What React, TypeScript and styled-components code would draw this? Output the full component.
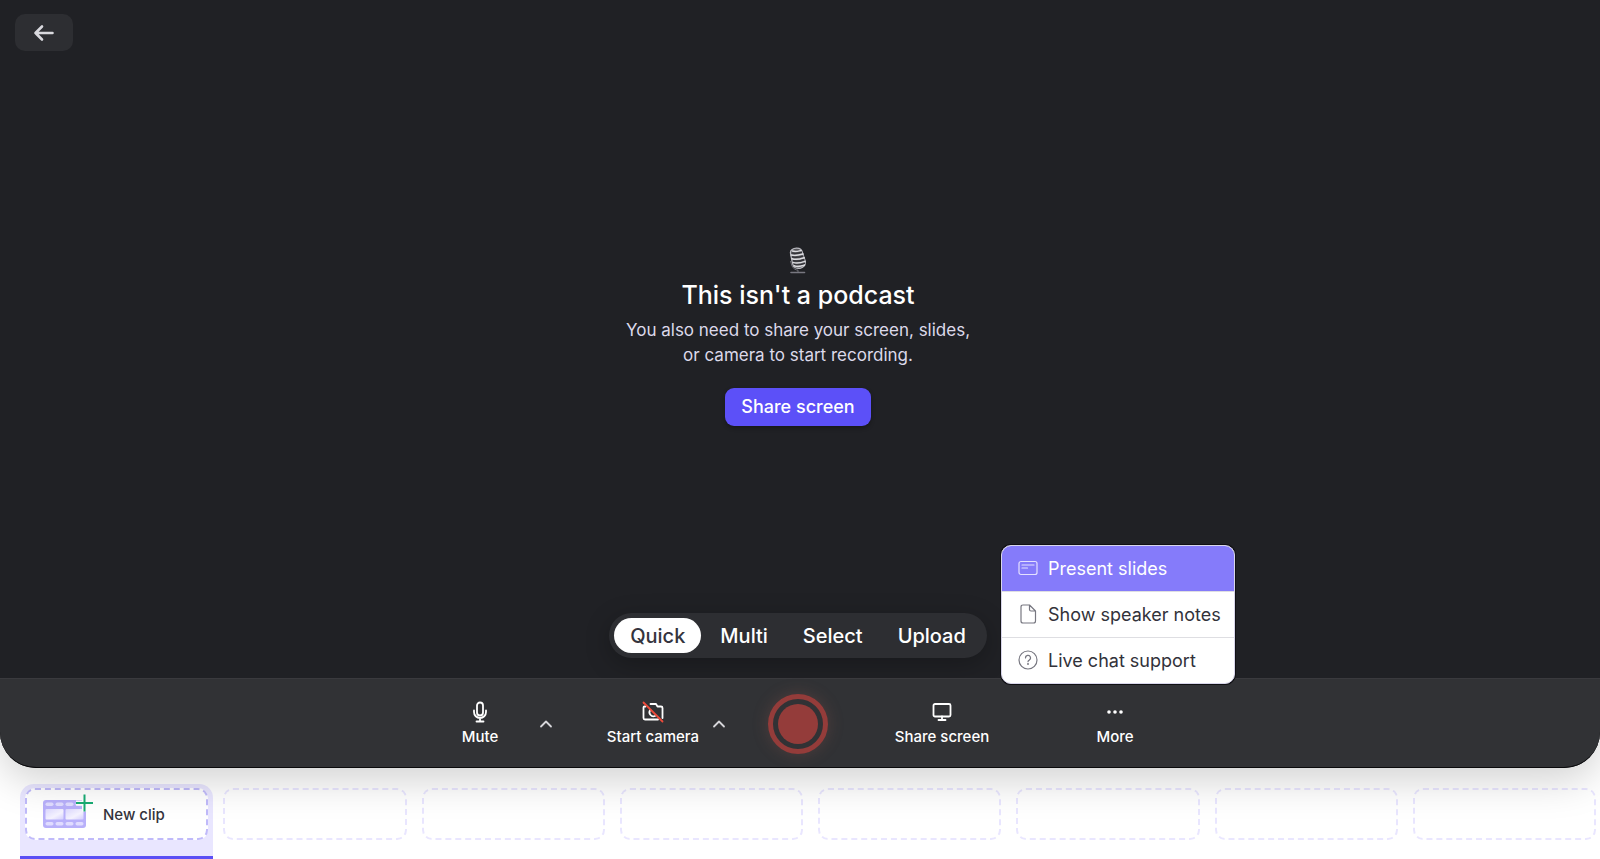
import React from "react";
import styled, { createGlobalStyle, css } from "styled-components";

const GlobalStyle = createGlobalStyle`
  *, *::before, *::after { box-sizing: border-box; }
  body {
    margin: 0;
    background: #ffffff;
    font-family: Inter, "Liberation Sans", sans-serif;
    -webkit-font-smoothing: antialiased;
  }
  button {
    font: inherit;
    color: inherit;
    border: 0;
    margin: 0;
    padding: 0;
    background: none;
    cursor: pointer;
  }
  h1, p, ul { margin: 0; padding: 0; }
  svg { display: block; flex: none; }
`;

const Page = styled.div`
  display: flex;
  flex-direction: column;
  min-height: 100vh;
  overflow: hidden;
`;

const Recorder = styled.main`
  position: relative;
  z-index: 1;
  flex: 1;
  display: flex;
  flex-direction: column;
  border-radius: 0 0 36px 36px;
  background: #202125;
  box-shadow: 0 12px 40px rgba(0, 0, 0, 0.18);
`;

const Stage = styled.section`
  flex: 1;
  display: grid;
  padding: 14px 4px 20px 0;

  > * { grid-area: 1 / 1; }
`;

const BackButton = styled.button`
  place-self: start;
  display: grid;
  place-items: center;
  width: 58px;
  height: 37px;
  margin-left: 15px;
  border-radius: 10px;
  background: #2d2e32;
  color: #d9d9de;
`;

const Message = styled.div`
  place-self: center;
  display: flex;
  flex-direction: column;
  align-items: center;
  text-align: center;
`;

const Title = styled.h1`
  margin-top: 5px;
  font-size: 25px;
  line-height: 32px;
  font-weight: 500;
  color: #ffffff;
`;

const Lead = styled.p`
  margin-top: 7px;
  font-size: 17px;
  line-height: 25px;
  color: #dcd9ea;
`;

const PrimaryButton = styled.button`
  height: 38px;
  margin-top: 20px;
  padding: 0 16px;
  border-radius: 9px;
  background: #5c50f8;
  box-shadow: 0 2px 4px rgba(0, 0, 0, 0.3);
  font-size: 18px;
  font-weight: 500;
  color: #ffffff;
`;

const ModeBar = styled.div`
  place-self: end center;
  display: flex;
  gap: 3px;
  padding: 5px;
  border-radius: 23px;
  background: #2d2e32;
  box-shadow: 0 6px 24px rgba(0, 0, 0, 0.25);
`;

const ModeButton = styled.button<{ $active?: boolean }>`
  height: 35px;
  padding: 0 16px;
  border-radius: 18px;
  font-size: 20px;
  font-weight: 500;
  color: #ffffff;
  ${(p) => p.$active && css`
    background: #ffffff;
    color: #34343d;
  `}
`;

const Toolbar = styled.section`
  display: grid;
  grid-template-columns: 1fr auto 1fr;
  align-items: center;
  height: 90px;
  padding: 1px 4px 0 0;
  border-top: 1px solid #3a3a3e;
  border-bottom: 1px solid #0a0a0c;
  border-radius: 0 0 36px 36px;
  background: #313235;
`;

const ToolGroup = styled.div<{ $side: "left" | "right" }>`
  display: flex;
  ${(p) => p.$side === "left"
    ? css`justify-content: flex-end; gap: 41px; padding-right: 37px;`
    : css`gap: 65px; padding-left: 60px;`}
`;

const Tool = styled.div`
  position: relative;
  display: flex;
  align-items: center;
`;

const ToolButton = styled.button`
  display: flex;
  flex-direction: column;
  align-items: center;
  gap: 4px;
  width: 108px;
  font-size: 15px;
  line-height: 20px;
  font-weight: 500;
  color: #ffffff;
  white-space: nowrap;
`;

const OptionsButton = styled.button`
  display: grid;
  place-items: center;
  width: 24px;
  height: 24px;
  color: #d6d6da;
`;

const RecordButton = styled.button`
  display: grid;
  place-items: center;
  width: 60px;
  height: 60px;
  border: 5px solid #943c3a;
  border-radius: 50%;
  box-shadow: 0 0 16px rgba(148, 90, 80, 0.3);

  &::before {
    content: "";
    width: 40px;
    height: 40px;
    border-radius: 50%;
    background: #943c3a;
  }
`;

const Menu = styled.ul`
  position: absolute;
  right: -66px;
  bottom: 63px;
  width: 234px;
  overflow: hidden;
  list-style: none;
  border: 1px solid #d8d6ea;
  border-radius: 10px;
  background: #ffffff;
  box-shadow: 0 0 0 1px #101014;
`;

const MenuItem = styled.li`
  & + & { border-top: 1px solid #dedee2; }
`;

const MenuButton = styled.button<{ $active?: boolean }>`
  display: flex;
  align-items: center;
  gap: 10px;
  width: 100%;
  height: 45px;
  padding: 0 16px;
  font-size: 18px;
  color: #32323a;
  white-space: nowrap;

  svg { color: #777780; }
  ${(p) => p.$active && css`
    background: #857bfa;
    color: #ffffff;
    svg { color: #e4e1ff; }
  `}
`;

const ClipStrip = styled.section`
  display: grid;
  grid-template-columns: repeat(8, 1fr);
  gap: 15px;
  height: 91px;
  padding: 20px 4px 0 25px;
`;

const SelectedClip = styled.div`
  margin: -4px -5px 0;
  padding: 4px 5px 0;
  border-radius: 14px 14px 0 0;
  border-bottom: 3px solid #5b4ff5;
  background: #e9e6ff;
`;

const NewClipButton = styled.button`
  display: flex;
  align-items: center;
  gap: 8px;
  width: 100%;
  height: 52px;
  padding: 0 16px;
  border: 2px dashed #c0bafa;
  border-radius: 10px;
  background: #ffffff;
  font-size: 15px;
  font-weight: 500;
  color: #34343c;
  white-space: nowrap;
`;

const EmptyClip = styled.div`
  height: 52px;
  border: 2px dashed #e9e6ff;
  border-radius: 10px;
`;

const line = { fill: "none", stroke: "currentColor", strokeLinecap: "round", strokeLinejoin: "round" } as const;

const ArrowIcon = () => (
  <svg width="22" height="18" viewBox="0 0 22 18" {...line} strokeWidth="2.600" aria-hidden="true">
    <path d="M19.500 9H2.500M9 2.500L2.500 9L9 15.500" />
  </svg>
);

const StudioMicIcon = () => (
  <svg width="20" height="27" viewBox="0 0 20 27" fill="none" aria-hidden="true">
    <path d="M2.200 7C1.500 3.500 4.500 1 8.500 1C12 .800 14 2.500 14.800 6L17.500 14C18.300 18 15.500 21 12 21.500C8 22 5 20.500 4.200 16Z" fill="#55555a" />
    <path d="M2.500 6.500C1.800 3 5.500 1.200 8.500 1.100C12 1 14 3 14.600 6L17.200 14C18 18.500 15 21 12 21.300C7.500 22 5 19.500 4.400 16Z" stroke="#b8b8be" strokeWidth="1.200" />
    <path d="M4.500 4C8 5.200 10.500 4 13 3.500M3.200 8C7 9.200 11.500 8 15 7M4 11.700C8 13 12.500 12 16.200 10.700M5 15.400C9 16.800 13 15.800 17 14.400M6.200 18.800C10 20 14 19 16.500 18" stroke="#dcdce0" strokeWidth="1.500" strokeLinecap="round" />
    <path d="M4 6C8 7 11 6 14 5.200M4 9.800C8 11 12 10 15.500 9M5 13.600C9 14.800 13 13.800 16.500 12.600M6 17.200C10 18.400 14 17.400 17 16.200" stroke="#303035" strokeWidth="1.200" />
    <path d="M2.500 14L4 19C5.500 22 8 23 10 23.200V25" stroke="#707078" strokeWidth="1" />
    <path d="M3 25.500H16.500" stroke="#777780" strokeWidth="1.600" strokeLinecap="round" />
  </svg>
);

const MicIcon = () => (
  <svg width="22" height="22" viewBox="0 0 22 22" {...line} strokeWidth="1.800" aria-hidden="true">
    <rect x="8" y="1.500" width="6" height="13" rx="3" />
    <path d="M5 9.500V11A6 6 0 0 0 17 11V9.500M11 17V20.500M7.500 20.500H14.500" />
  </svg>
);

const CameraOffIcon = () => (
  <svg width="22" height="22" viewBox="0 0 22 22" {...line} strokeWidth="1.800" aria-hidden="true">
    <path d="M3.500 5.500H2.500Q1.500 5.500 1.500 6.500V17Q1.500 18.500 3 18.500H16M8.500 3H14L15.500 5.500H19Q20.500 5.500 20.500 7V17M8.200 9A4 4 0 0 0 13 15" />
    <path d="M1.500 1.500L20.500 20.500" stroke="#ee4b3b" />
  </svg>
);

const MonitorIcon = () => (
  <svg width="22" height="22" viewBox="0 0 22 22" {...line} strokeWidth="1.800" aria-hidden="true">
    <rect x="2.500" y="3" width="17" height="12.500" rx="1.500" />
    <path d="M11 15.500V19M7.500 19H14.500" />
  </svg>
);

const MoreIcon = () => (
  <svg width="22" height="22" viewBox="0 0 22 22" fill="currentColor" aria-hidden="true">
    <circle cx="5" cy="11" r="1.800" /><circle cx="11" cy="11" r="1.800" /><circle cx="17" cy="11" r="1.800" />
  </svg>
);

const ChevronUpIcon = () => (
  <svg width="14" height="10" viewBox="0 0 14 10" {...line} strokeWidth="1.800" aria-hidden="true">
    <path d="M2 7.500L7 2.500L12 7.500" />
  </svg>
);

const SlidesIcon = () => (
  <svg width="20" height="20" viewBox="0 0 20 20" {...line} strokeWidth="1.200" aria-hidden="true">
    <rect x="1" y="3.500" width="18" height="13" rx="2" />
    <path d="M4 7H16M4 10H9.500" />
  </svg>
);

const NotesIcon = () => (
  <svg width="20" height="20" viewBox="0 0 20 20" {...line} strokeWidth="1.200" aria-hidden="true">
    <path d="M11.500 1H5Q3 1 3 3V17Q3 19 5 19H15.500Q17.500 19 17.500 17V7ZM11.500 1V5.500Q11.500 7 13 7H17.500" />
  </svg>
);

const HelpIcon = () => (
  <svg width="20" height="20" viewBox="0 0 20 20" {...line} strokeWidth="1.200" aria-hidden="true">
    <circle cx="10" cy="10" r="9" />
    <path d="M7.500 8A2.500 2.500 0 1 1 11.200 10.100Q10 10.700 10 11.700" />
    <circle cx="10" cy="14" r=".4" />
  </svg>
);

const FilmIcon = () => (
  <svg width="52" height="42" viewBox="0 0 52 42" fill="none" aria-hidden="true">
    <defs>
      <linearGradient id="frame" x1="0" x2="1" y1="0" y2="1">
        <stop offset="0" stopColor="#dcd8ff" />
        <stop offset=".6" stopColor="#f5f3ff" />
        <stop offset="1" stopColor="#d4cfff" />
      </linearGradient>
    </defs>
    <rect x="0" y="7" width="43" height="28" rx="3" fill="#b8b0fa" />
    <rect x="2.500" y="16" width="18" height="10.500" rx="1" fill="url(#frame)" />
    <rect x="22.500" y="16" width="18" height="10.500" rx="1" fill="url(#frame)" />
    {[2.5, 12.5, 22.5, 32.5].map((x) => (
      <React.Fragment key={x}>
        <rect x={x} y="9.500" width="8" height="3.500" rx="1.700" fill="#e0dcff" />
        <rect x={x} y="29" width="8" height="3.500" rx="1.700" fill="#e0dcff" />
      </React.Fragment>
    ))}
    <path d="M33 10H50M41.500 1.500V18.500" stroke="#ffffff" strokeWidth="5" />
    <path d="M33 10H50M41.500 1.500V18.500" stroke="#18ac74" strokeWidth="2" />
  </svg>
);

const modes = ["Quick", "Multi", "Select", "Upload"];

const menuItems = [
  { label: "Present slides", icon: <SlidesIcon /> },
  { label: "Show speaker notes", icon: <NotesIcon /> },
  { label: "Live chat support", icon: <HelpIcon /> },
];

export default function App() {
  const [mode, setMode] = React.useState("Quick");
  const [highlighted, setHighlighted] = React.useState("Present slides");

  return (
    <>
      <GlobalStyle />
      <Page>
        <Recorder>
          <Stage>
            <Message>
              <StudioMicIcon />
              <Title>This isn't a podcast</Title>
              <Lead>
                You also need to share your screen, slides,
                <br />
                or camera to start recording.
              </Lead>
              <PrimaryButton type="button">Share screen</PrimaryButton>
            </Message>
            <BackButton type="button" aria-label="Back">
              <ArrowIcon />
            </BackButton>
            <ModeBar>
              {modes.map((name) => (
                <ModeButton key={name} type="button" $active={name === mode} onClick={() => setMode(name)}>
                  {name}
                </ModeButton>
              ))}
            </ModeBar>
          </Stage>
          <Toolbar>
            <ToolGroup $side="left">
              <Tool>
                <ToolButton type="button"><MicIcon />Mute</ToolButton>
                <OptionsButton type="button" aria-label="Microphone options"><ChevronUpIcon /></OptionsButton>
              </Tool>
              <Tool>
                <ToolButton type="button"><CameraOffIcon />Start camera</ToolButton>
                <OptionsButton type="button" aria-label="Camera options"><ChevronUpIcon /></OptionsButton>
              </Tool>
            </ToolGroup>
            <RecordButton type="button" aria-label="Record" />
            <ToolGroup $side="right">
              <Tool>
                <ToolButton type="button"><MonitorIcon />Share screen</ToolButton>
              </Tool>
              <Tool>
                <ToolButton type="button"><MoreIcon />More</ToolButton>
                <Menu>
                  {menuItems.map(({ label, icon }) => (
                    <MenuItem key={label}>
                      <MenuButton
                        type="button"
                        $active={label === highlighted}
                        onMouseEnter={() => setHighlighted(label)}
                      >
                        {icon}
                        {label}
                      </MenuButton>
                    </MenuItem>
                  ))}
                </Menu>
              </Tool>
            </ToolGroup>
          </Toolbar>
        </Recorder>
        <ClipStrip>
          <SelectedClip>
            <NewClipButton type="button"><FilmIcon />New clip</NewClipButton>
          </SelectedClip>
          {Array.from({ length: 7 }, (_, i) => <EmptyClip key={i} />)}
        </ClipStrip>
      </Page>
    </>
  );
}
